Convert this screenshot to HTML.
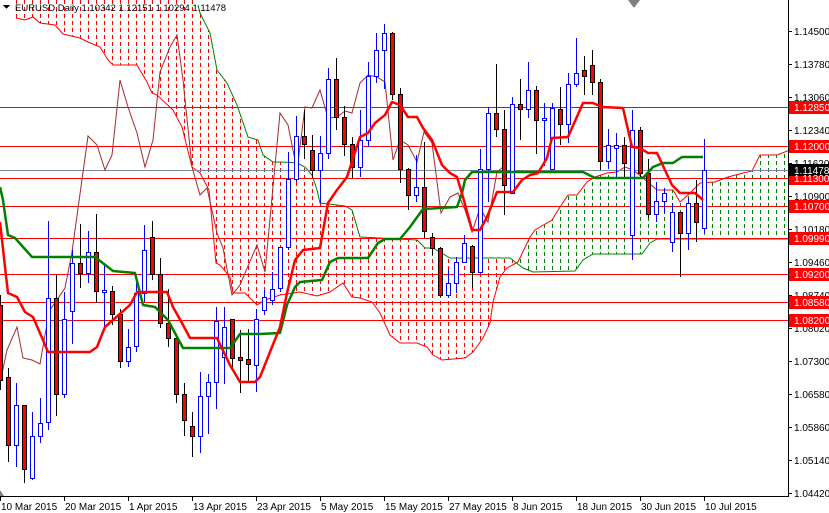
<!DOCTYPE html>
<html><head><meta charset="utf-8"><style>
html,body{margin:0;padding:0;background:#fff;}
svg{display:block;}
text{font-family:"Liberation Sans",sans-serif;}
</style></head><body>
<svg width="829" height="513" viewBox="0 0 829 513" xmlns="http://www.w3.org/2000/svg" shape-rendering="crispEdges">
<defs>
<pattern id="pr" width="8" height="7" patternUnits="userSpaceOnUse"><rect x="0" y="0" width="1" height="4" fill="#ff0000"/></pattern>
<pattern id="pg" width="8" height="7" patternUnits="userSpaceOnUse"><rect x="0" y="0" width="1" height="4" fill="#008000"/></pattern>
<clipPath id="cl"><rect x="0" y="0" width="788" height="496"/></clipPath>
</defs>
<rect width="829" height="513" fill="#fff"/>
<g clip-path="url(#cl)">
<polygon fill="url(#pr)" points="15,-5 200,-5 200,13 210,33 217,70 227,83 237,105 248,137 258,140 263,155 273,162 282,162 297,163 305,167 312,175 317,190 320,203 345,206 352,210 360,237 417,240 425,248 433,248 450,258 510,258 518,262 507,268 500,277 493,302 490,323 483,338 473,352 465,358 442,360 433,355 427,347 417,343 400,343 390,335 380,313 372,302 360,298 352,297 343,283 330,292 317,296 300,292 280,295 265,300 257,305 245,293 233,293 230,277 220,265 216,263 209,190 200,173 192,167 182,127 173,110 157,95 152,93 147,82 137,65 113,65 108,60 100,47 88,42 80,38 63,34 55,25 40,23 33,17 25,20 16,18"/>
<polygon fill="url(#pg)" points="518,262 530,237 535,230 552,220 560,207 568,195 577,195 587,182 595,177 607,173 617,172 625,167 633,170 642,177 657,190 673,190 680,202 688,195 700,183 715,182 728,177 743,173 752,171 760,155 777,155 790,150 790,239 657,239 650,243 642,254 593,254 583,260 575,271 533,272 523,268"/>
<polyline fill="none" stroke="#ff0000" stroke-width="1" shape-rendering="auto" points="16,18 25,20 33,17 40,23 55,25 63,34 80,38 88,42 100,47 108,60 113,65 137,65 147,82 152,93 157,95 173,110 182,127 192,167 200,173 209,190 216,263 220,265 230,277 233,293 245,293 257,305 265,300 280,295 300,292 317,296 330,292 343,283 352,297 360,298 372,302 380,313 390,335 400,343 417,343 427,347 433,355 442,360 465,358 473,352 483,338 490,323 493,302 500,277 507,268 518,262 530,237 535,230 552,220 560,207 568,195 577,195 587,182 595,177 607,173 617,172 625,167 633,170 642,177 657,190 673,190 680,202 688,195 700,183 715,182 728,177 743,173 752,171 760,155 777,155 790,150"/>
<polyline fill="none" stroke="#008000" stroke-width="1" shape-rendering="auto" points="198,5 200,13 210,33 217,70 227,83 237,105 248,137 258,140 263,155 273,162 282,162 297,163 305,167 312,175 317,190 320,203 345,206 352,210 360,237 417,240 425,248 433,248 450,258 510,258 523,268 533,272 575,271 583,260 593,254 642,254 650,243 657,239 790,239"/>
<g stroke="#ff0000" stroke-width="1">
<line x1="0" y1="107.5" x2="788" y2="107.5"/>
<line x1="0" y1="146.5" x2="788" y2="146.5"/>
<line x1="0" y1="178.5" x2="788" y2="178.5"/>
<line x1="0" y1="206.5" x2="788" y2="206.5"/>
<line x1="0" y1="238.5" x2="788" y2="238.5"/>
<line x1="0" y1="274.5" x2="788" y2="274.5"/>
<line x1="0" y1="302.5" x2="788" y2="302.5"/>
<line x1="0" y1="320.5" x2="788" y2="320.5"/>
</g>
<line x1="0" y1="170.5" x2="788" y2="170.5" stroke="#778899" stroke-width="1"/>
<polyline fill="none" stroke="#a52a2a" stroke-width="1" shape-rendering="auto" points="0,383 7,350 17,327 23,358 32,360 40,364 45,335 50,310 65,288 72,252 88,136 97,145 105,170 112,155 120,80 128,107 137,133 145,167 153,140 160,72 170,47 177,35 183,80 192,167 200,195 207,188 217,233 223,248 232,295 240,285 257,245 265,272 273,187 280,113 288,125 297,170 305,107 312,108 320,90 328,118 337,117 345,111 352,113 360,83 368,75 377,77 385,82 393,160 400,140 408,145 417,162 424,132 432,143 441,213 450,197 458,193 465,210 472,232 480,208 488,222 497,172 503,167"/>
<g stroke="#000" stroke-width="1" fill="#ff0000">
<path fill="none" d="M0.5 295V390M8.5 368V462M24.5 405V483M56.5 275V416M80.5 224V288M96.5 214V303M112.5 286V325M120.5 309V368M152.5 221V280M160.5 258V328M168.5 289V347M176.5 338V403M184.5 383V436M192.5 412V457M232.5 319V371M240.5 330V393M248.5 329V382M304.5 110V159M312.5 135V178M336.5 58V130M344.5 106V156M352.5 137V178M392.5 32V100M400.5 88V183M408.5 168V210M424.5 142V238M432.5 233V255M440.5 247V297M472.5 245V288M496.5 64V137M504.5 110V215M520.5 79V140M536.5 86V154M560.5 87V145M584.5 56V95M592.5 50V95M600.5 79V170M624.5 137V178M640.5 127V178M648.5 159V218M680.5 212V277M696.5 180V242"/>
<rect x="-1.5" y="305.5" width="4" height="75"/>
<rect x="6.5" y="377.5" width="4" height="68"/>
<rect x="22.5" y="405.5" width="4" height="64"/>
<rect x="54.5" y="298.5" width="4" height="96"/>
<rect x="78.5" y="263.5" width="4" height="10"/>
<rect x="94.5" y="252.5" width="4" height="39"/>
<rect x="110.5" y="291.5" width="4" height="23"/>
<rect x="118.5" y="314.5" width="4" height="47"/>
<rect x="150.5" y="237.5" width="4" height="37"/>
<rect x="158.5" y="274.5" width="4" height="49"/>
<rect x="166.5" y="323.5" width="4" height="15"/>
<rect x="174.5" y="338.5" width="4" height="56"/>
<rect x="182.5" y="394.5" width="4" height="26"/>
<rect x="190.5" y="426.5" width="4" height="10"/>
<rect x="230.5" y="319.5" width="4" height="39"/>
<rect x="238.5" y="357.5" width="4" height="3"/>
<rect x="246.5" y="359.5" width="4" height="5"/>
<rect x="302.5" y="136.5" width="4" height="8"/>
<rect x="310.5" y="150.5" width="4" height="20"/>
<rect x="334.5" y="79.5" width="4" height="38"/>
<rect x="342.5" y="117.5" width="4" height="27"/>
<rect x="350.5" y="144.5" width="4" height="23"/>
<rect x="390.5" y="33.5" width="4" height="61"/>
<rect x="398.5" y="94.5" width="4" height="75"/>
<rect x="406.5" y="169.5" width="4" height="26"/>
<rect x="422.5" y="187.5" width="4" height="44"/>
<rect x="430.5" y="237.5" width="4" height="11"/>
<rect x="438.5" y="248.5" width="4" height="47"/>
<rect x="470.5" y="246.5" width="4" height="26"/>
<rect x="494.5" y="113.5" width="4" height="16"/>
<rect x="502.5" y="129.5" width="4" height="56"/>
<rect x="518.5" y="104.5" width="4" height="5"/>
<rect x="534.5" y="90.5" width="4" height="30"/>
<rect x="558.5" y="109.5" width="4" height="15"/>
<rect x="582.5" y="70.5" width="4" height="6"/>
<rect x="590.5" y="65.5" width="4" height="17"/>
<rect x="598.5" y="82.5" width="4" height="79"/>
<rect x="622.5" y="145.5" width="4" height="18"/>
<rect x="638.5" y="130.5" width="4" height="43"/>
<rect x="646.5" y="173.5" width="4" height="41"/>
<rect x="678.5" y="212.5" width="4" height="21"/>
<rect x="694.5" y="203.5" width="4" height="19"/>
</g>
<g stroke="#0000ff" stroke-width="1" fill="#fff">
<path fill="none" d="M16.5 383V467M32.5 412V480M40.5 398V443M48.5 221V430M64.5 292V398M72.5 250V344M88.5 231V283M104.5 263V327M128.5 329V367M136.5 281V352M144.5 225V302M200.5 372V453M208.5 374V434M216.5 307V409M224.5 307V384M256.5 309V392M264.5 290V315M272.5 272V305M280.5 247V292M288.5 152V250M296.5 116V182M320.5 136V203M328.5 68V159M360.5 110V177M368.5 62V147M376.5 33V83M384.5 24V89M416.5 155V202M448.5 269V297M456.5 257V293M464.5 235V263M480.5 149V273M488.5 107V202M512.5 97V193M528.5 62V118M544.5 103V166M552.5 103V170M568.5 73V143M576.5 38V87M608.5 129V169M616.5 133V178M632.5 110V260M656.5 182V222M664.5 188V213M672.5 203V252M688.5 198V250M704.5 139V233"/>
<rect x="14.5" y="405.5" width="4" height="40"/>
<rect x="30.5" y="436.5" width="4" height="42"/>
<rect x="38.5" y="423.5" width="4" height="13"/>
<rect x="46.5" y="298.5" width="4" height="124"/>
<rect x="62.5" y="319.5" width="4" height="75"/>
<rect x="70.5" y="263.5" width="4" height="48"/>
<rect x="86.5" y="252.5" width="4" height="21"/>
<rect x="102.5" y="290.5" width="4" height="2"/>
<rect x="126.5" y="347.5" width="4" height="14"/>
<rect x="134.5" y="293.5" width="4" height="53"/>
<rect x="142.5" y="250.5" width="4" height="43"/>
<rect x="198.5" y="396.5" width="4" height="40"/>
<rect x="206.5" y="382.5" width="4" height="14"/>
<rect x="214.5" y="321.5" width="4" height="61"/>
<rect x="222.5" y="327.5" width="4" height="30"/>
<rect x="254.5" y="319.5" width="4" height="46"/>
<rect x="262.5" y="297.5" width="4" height="13"/>
<rect x="270.5" y="289.5" width="4" height="11"/>
<rect x="278.5" y="247.5" width="4" height="41"/>
<rect x="286.5" y="179.5" width="4" height="68"/>
<rect x="294.5" y="136.5" width="4" height="43"/>
<rect x="318.5" y="153.5" width="4" height="17"/>
<rect x="326.5" y="79.5" width="4" height="74"/>
<rect x="358.5" y="140.5" width="4" height="27"/>
<rect x="366.5" y="76.5" width="4" height="64"/>
<rect x="374.5" y="50.5" width="4" height="26"/>
<rect x="382.5" y="33.5" width="4" height="17"/>
<rect x="414.5" y="187.5" width="4" height="8"/>
<rect x="446.5" y="283.5" width="4" height="12"/>
<rect x="454.5" y="262.5" width="4" height="21"/>
<rect x="462.5" y="243.5" width="4" height="19"/>
<rect x="478.5" y="169.5" width="4" height="103"/>
<rect x="486.5" y="113.5" width="4" height="56"/>
<rect x="510.5" y="104.5" width="4" height="89"/>
<rect x="526.5" y="90.5" width="4" height="19"/>
<rect x="542.5" y="118.5" width="4" height="2"/>
<rect x="550.5" y="108.5" width="4" height="61"/>
<rect x="566.5" y="84.5" width="4" height="40"/>
<rect x="574.5" y="73.5" width="4" height="11"/>
<rect x="606.5" y="145.5" width="4" height="16"/>
<rect x="614.5" y="145.5" width="4" height="3"/>
<rect x="630.5" y="130.5" width="4" height="105"/>
<rect x="654.5" y="201.5" width="4" height="13"/>
<rect x="662.5" y="193.5" width="4" height="8"/>
<rect x="670.5" y="212.5" width="4" height="30"/>
<rect x="686.5" y="203.5" width="4" height="30"/>
<rect x="702.5" y="170.5" width="4" height="58"/>
</g>
<polyline fill="none" stroke="#008000" stroke-width="2.5" shape-rendering="auto" stroke-linejoin="round" points="0,187 3,200 8,235 15,238 32,257 95,257 113,271 135,273 143,305 155,307 168,320 183,348 230,348 240,334 260,334 280,333 287,305 295,287 300,282 322,280 330,262 338,258 368,258 378,243 385,239 400,239 410,227 423,209 457,207 462,193 465,180 472,172 583,172 595,178 643,178 653,167 663,163 673,163 682,157 703,157"/>
<polyline fill="none" stroke="#ff0000" stroke-width="2.5" shape-rendering="auto" stroke-linejoin="round" points="0,222 5,267 8,293 17,297 25,312 33,317 43,340 48,352 90,352 97,347 105,327 130,305 137,292 167,292 173,307 182,323 190,338 217,338 230,365 240,382 255,382 260,377 280,327 287,293 295,260 303,250 320,248 328,203 337,190 347,177 360,137 368,133 375,123 385,115 392,102 400,105 408,117 417,117 423,128 432,140 442,165 450,173 457,177 463,197 472,230 480,230 487,217 497,192 513,192 522,180 530,175 538,173 547,158 552,138 568,137 583,103 593,103 602,107 623,108 632,147 640,148 648,153 657,153 672,185 680,193 695,193 703,200"/>
</g>
<line x1="788.5" y1="0" x2="788.5" y2="497" stroke="#000" stroke-width="1"/>
<line x1="0" y1="496.5" x2="789" y2="496.5" stroke="#000" stroke-width="1"/>
<g stroke="#000" stroke-width="1">
<path d="M788 31.5h4M788 64.5h4M788 97.5h4M788 130.5h4M788 163.5h4M788 196.5h4M788 229.5h4M788 262.5h4M788 295.5h4M788 328.5h4M788 361.5h4M788 394.5h4M788 427.5h4M788 460.5h4M788 493.5h4"/>
<path d="M0.5 496v5M64.5 496v5M128.5 496v5M192.5 496v5M256.5 496v5M320.5 496v5M384.5 496v5M448.5 496v5M512.5 496v5M576.5 496v5M640.5 496v5M704.5 496v5"/>
</g>
<g font-size="10" fill="#000">
<text x="794" y="35">1.14500</text>
<text x="794" y="68">1.13780</text>
<text x="794" y="101">1.13060</text>
<text x="794" y="134">1.12340</text>
<text x="794" y="167">1.11620</text>
<text x="794" y="200">1.10900</text>
<text x="794" y="233">1.10180</text>
<text x="794" y="266">1.09460</text>
<text x="794" y="299">1.08740</text>
<text x="794" y="332">1.08020</text>
<text x="794" y="365">1.07300</text>
<text x="794" y="398">1.06580</text>
<text x="794" y="431">1.05860</text>
<text x="794" y="464">1.05140</text>
<text x="794" y="497">1.04420</text>
</g>
<g fill="#ff0000">
<rect x="789" y="101" width="40" height="13"/>
<rect x="789" y="140" width="40" height="13"/>
<rect x="789" y="172" width="40" height="13"/>
<rect x="789" y="200" width="40" height="13"/>
<rect x="789" y="232" width="40" height="13"/>
<rect x="789" y="268" width="40" height="13"/>
<rect x="789" y="296" width="40" height="13"/>
<rect x="789" y="314" width="40" height="13"/>
</g>
<rect x="789" y="164" width="40" height="12" fill="#000"/>
<g font-size="10" fill="#fff">
<text x="794" y="111">1.12850</text>
<text x="794" y="150">1.12000</text>
<text x="794" y="174">1.11478</text>
<text x="794" y="182">1.11300</text>
<text x="794" y="210">1.10700</text>
<text x="794" y="242">1.09990</text>
<text x="794" y="278">1.09200</text>
<text x="794" y="306">1.08580</text>
<text x="794" y="324">1.08200</text>
</g>
<g font-size="10" fill="#000">
<text x="1" y="510">10 Mar 2015</text>
<text x="65" y="510">20 Mar 2015</text>
<text x="129" y="510">1 Apr 2015</text>
<text x="193" y="510">13 Apr 2015</text>
<text x="257" y="510">23 Apr 2015</text>
<text x="321" y="510">5 May 2015</text>
<text x="385" y="510">15 May 2015</text>
<text x="449" y="510">27 May 2015</text>
<text x="513" y="510">8 Jun 2015</text>
<text x="577" y="510">18 Jun 2015</text>
<text x="641" y="510">30 Jun 2015</text>
<text x="705" y="510">10 Jul 2015</text>
</g>
<polygon points="3,5 10,5 6.5,9" fill="#000"/>
<text x="15" y="11" font-size="9.5" fill="#000">EURUSD,Daily  1.10342 1.12151 1.10294 1.11478</text>
<polygon points="628,0 640,0 634,8" fill="#808080"/>
<polygon points="0,490 4,496 0,496" fill="#808080"/>
</svg>
</body></html>
